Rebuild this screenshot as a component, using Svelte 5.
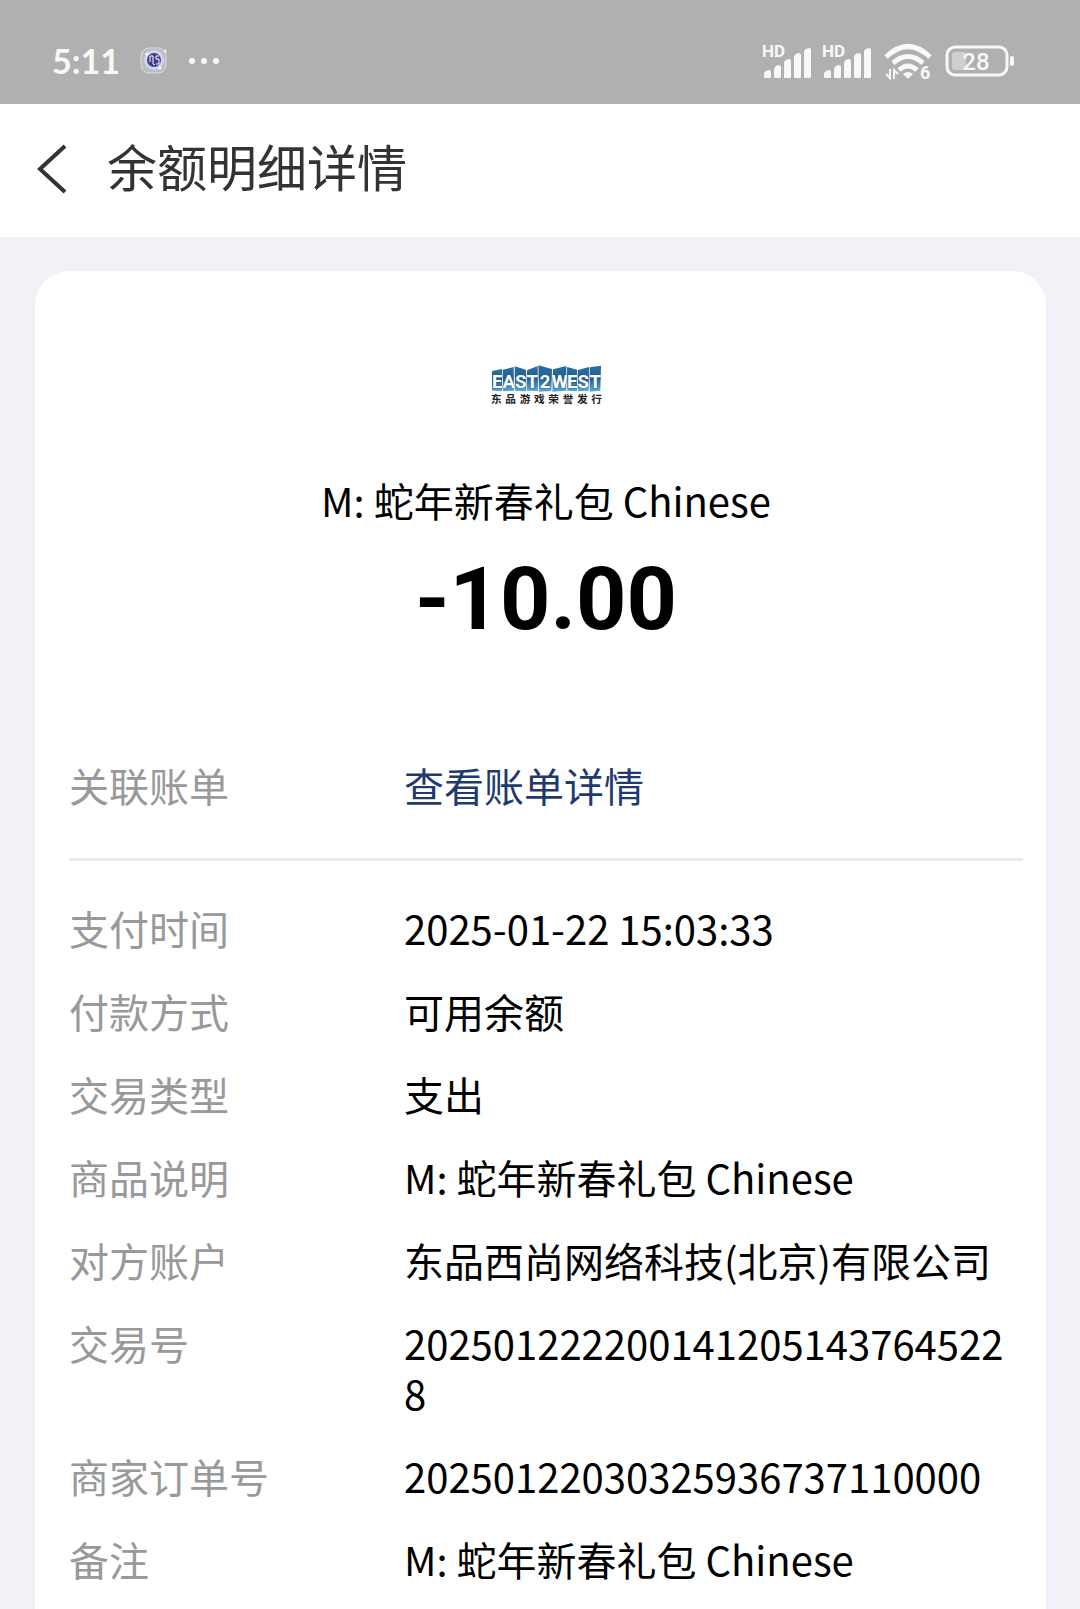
<script>
  const orderLink = { label: '关联账单', text: '查看账单详情' };

  const rows = [
    { label: '支付时间', value: '2025-01-22 15:03:33' },
    { label: '付款方式', value: '可用余额' },
    { label: '交易类型', value: '支出' },
    { label: '商品说明', value: 'M: 蛇年新春礼包 Chinese' },
    { label: '对方账户', value: '东品西尚网络科技(北京)有限公司' },
    { label: '交易号', value: '2025012222001412051437645228' },
    { label: '商家订单号', value: '20250122030325936737110000' },
    { label: '备注', value: 'M: 蛇年新春礼包 Chinese' }
  ];

  // logo tiles: letter, polygon corners, letter centre
  const tiles = [
    { letter: 'E', points: '6,24 37,18 36,85 6,83', x: 22 },
    { letter: 'A', points: '39,20 71,12 72,83 39,85', x: 56 },
    { letter: 'S', points: '74,10 108,20 108,85 75,83', x: 92 },
    { letter: 'T', points: '111,22 143,9 144,84 110,83', x: 127 },
    { letter: '2', points: '145,7 186,18 184,84 147,86', x: 165 },
    { letter: 'W', points: '189,19 229,9 229,83 187,86', x: 209 },
    { letter: 'E', points: '231,12 262,20 261,85 232,83', x: 247 },
    { letter: 'S', points: '264,21 297,12 296,83 264,85', x: 280 },
    { letter: 'T', points: '299,13 333,8 331,83 299,86', x: 316 }
  ];
  const slogan = [...'东品游戏荣誉发行'];
  const sims = [1, 2];
</script>

<div class="page">
  <div class="status">
    <div class="side">
      <span class="clock">5:11</span>
      <svg class="app" viewBox="0 0 28 28" width="28" height="28">
        <rect x="1" y="1" width="25" height="25" rx="8" fill="#bcbcc4" stroke="#dedede" />
        <circle cx="14" cy="13" r="10" fill="#d2d4ee" />
        <circle cx="14" cy="13" r="7" fill="#403c8e" />
        <path d="M10 9v6M10 9h3v8l2 1M19 9h-3v3h3v5h-3" fill="none" stroke="#fff" stroke-width="1" />
        <circle cx="7" cy="7" r="1.5" fill="#fff" />
        <circle cx="25" cy="4" r="1.5" fill="#eee" />
        <circle cx="20" cy="21" r="1.5" fill="#fff" />
      </svg>
      <svg viewBox="0 0 32 8" width="32" height="8" fill="#f8f8f8">
        <circle cx="4" cy="4" r="3" />
        <circle cx="16" cy="4" r="3" />
        <circle cx="28" cy="4" r="3" />
      </svg>
    </div>
    <div class="side icons">
      {#each sims as sim (sim)}
        <svg viewBox="0 0 50 36" width="50" height="36" fill="#f8f8f8">
          <text x="0" y="14" class="hd">HD</text>
          <path d="M2 34v-3q0-2 2-3l3-1q2 0 2 2v5q0 1-1 1H3q-1 0-1-1z" />
          <path d="M12 34v-8q0-2 2-3l2-1q3 0 3 2v10q0 1-1 1h-5q-1 0-1-1z" />
          <path d="M22 34V20q0-2 2-3l2-1q3 0 3 2v16q0 1-1 1h-5q-1 0-1-1z" />
          <path d="M32 34V14q0-2 2-3l2-1q3 0 3 2v22q0 1-1 1h-5q-1 0-1-1z" />
          <path d="M42 34V9q0-2 2-3l3-1q2 0 2 2v27q0 1-1 1h-5q-1 0-1-1z" />
        </svg>
      {/each}
      <svg class="wifi" viewBox="0 0 50 38" width="50" height="38">
        <g fill="none" stroke="#f8f8f8" stroke-width="5">
          <path d="M2 15Q24-6 46 15" />
          <path d="M9 21Q24 8 39 21" />
          <path d="M15 28Q24 20 33 28" />
        </g>
        <path d="M19 32q5-4 10 0l-4 4q-1 1-2 0z" fill="#f8f8f8" />
        <path d="M6 27v9l-4-4M10 37v-9l4 4" fill="none" stroke="#f8f8f8" stroke-width="2" />
        <text x="36" y="37" class="six">6</text>
      </svg>
      <svg viewBox="0 0 70 32" width="70" height="32">
        <rect x="1" y="2" width="60" height="28" rx="8" fill="none" stroke="#f8f8f8" stroke-width="3" />
        <rect x="6" y="7" width="14" height="18" rx="3" fill="#cfcfcf" />
        <rect x="64" y="11" width="4" height="10" rx="2" fill="#f8f8f8" />
        <text x="30" y="25" class="level">28</text>
      </svg>
    </div>
  </div>

  <header>
    <button aria-label="返回">
      <svg viewBox="0 0 32 52" width="32" height="52">
        <path d="M29 3L4 26l25 23" fill="none" stroke="#333" stroke-width="4" />
      </svg>
    </button>
    <h1>余额明细详情</h1>
  </header>

  <main>
    <section class="card">
      <svg class="logo" viewBox="0 0 339 129" width="113" height="43">
        <defs>
          <linearGradient id="tile" x1="0" y1="0" x2="0" y2="1">
            <stop offset="0" stop-color="#2d6f9f" />
            <stop offset="0.5" stop-color="#1f5f98" />
            <stop offset="1" stop-color="#5cabd6" />
          </linearGradient>
        </defs>
        {#each tiles as tile}
          <polygon points={tile.points} fill="url(#tile)" />
          <text class="letter" x={tile.x} y="76">{tile.letter}</text>
        {/each}
        {#each slogan as char, i}
          <text class="slogan" x={19 + i * 43} y="119">{char}</text>
        {/each}
      </svg>
      <p class="name">M: 蛇年新春礼包 Chinese</p>
      <p class="amount">-10.00</p>

      <dl class="linked">
        <div class="row">
          <dt>{orderLink.label}</dt>
          <dd><a href="#bill">{orderLink.text}</a></dd>
        </div>
      </dl>
      <dl>
        {#each rows as row}
          <div class="row">
            <dt>{row.label}</dt>
            <dd>{row.value}</dd>
          </div>
        {/each}
      </dl>
    </section>
  </main>
</div>

<style>
  :global(body) {
    background: #f1f2f7;
  }

  .page {
    font-family: "Noto Sans CJK SC", "Noto Sans", sans-serif;
    font-size: 40px;
    line-height: 50px;
    color: #000;
  }

  svg {
    display: block;
    flex: none;
    overflow: visible;
  }

  .status {
    display: flex;
    justify-content: space-between;
    align-items: center;
    box-sizing: border-box;
    height: 104px;
    padding: 18px 64px 0 52px;
    background: #b0b0b0;
  }

  .side {
    display: flex;
    align-items: center;
  }
  .clock {
    font-family: Lato, sans-serif;
    font-size: 34px;
    font-weight: 700;
    color: #f8f8f8;
  }
  .app {
    margin: 0 20px;
  }
  .icons {
    gap: 10px;
  }
  .wifi {
    margin: 0 2px;
  }

  .hd, .six, .level {
    font-family: Roboto, sans-serif;
    font-weight: 700;
    fill: #f8f8f8;
  }
  .hd {
    font-size: 17px;
  }
  .six {
    font-size: 18px;
  }
  .level {
    font-size: 24px;
    font-weight: 500;
    text-anchor: middle;
  }

  header {
    display: flex;
    align-items: center;
    gap: 39px;
    box-sizing: border-box;
    height: 133px;
    padding: 0 36px 4px;
    background: #fff;
  }
  button {
    padding: 0;
    border: 0;
    background: none;
    cursor: pointer;
  }
  h1 {
    margin: 0 0 8px;
    font-size: 50px;
    font-weight: 400;
    color: #333;
  }

  main {
    padding: 34px 34px 0 35px;
  }
  .card {
    padding: 92px 23px 27px 34px;
    border-radius: 34px 34px 0 0;
    background: #fff;
  }

  .logo {
    margin: 0 auto;
  }
  .letter {
    font-family: Roboto, sans-serif;
    font-size: 56px;
    font-weight: 700;
    fill: #fff;
    stroke: #1d4f80;
    stroke-width: 2px;
    paint-order: stroke;
    text-anchor: middle;
  }
  .slogan {
    font-size: 32px;
    font-weight: 700;
    fill: #222;
    text-anchor: middle;
  }

  p {
    margin: 0;
    text-align: center;
  }
  .name {
    margin-top: 69px;
  }
  .amount {
    margin-top: 24px;
    font-family: Roboto, sans-serif;
    font-size: 88px;
    font-weight: 700;
    line-height: 100px;
  }

  dl {
    display: flex;
    flex-direction: column;
    gap: 33px;
    margin: 0;
  }
  .linked {
    margin: 111px 0 42px;
    padding-bottom: 48px;
    border-bottom: 3px solid #ececee;
  }
  .row {
    display: flex;
  }
  dt {
    flex: 0 0 335px;
    color: #999;
  }
  dd {
    flex: 1;
    min-width: 0;
    margin: 0;
    word-break: break-all;
  }
  a {
    color: #1f3b6c;
    text-decoration: none;
  }
</style>
